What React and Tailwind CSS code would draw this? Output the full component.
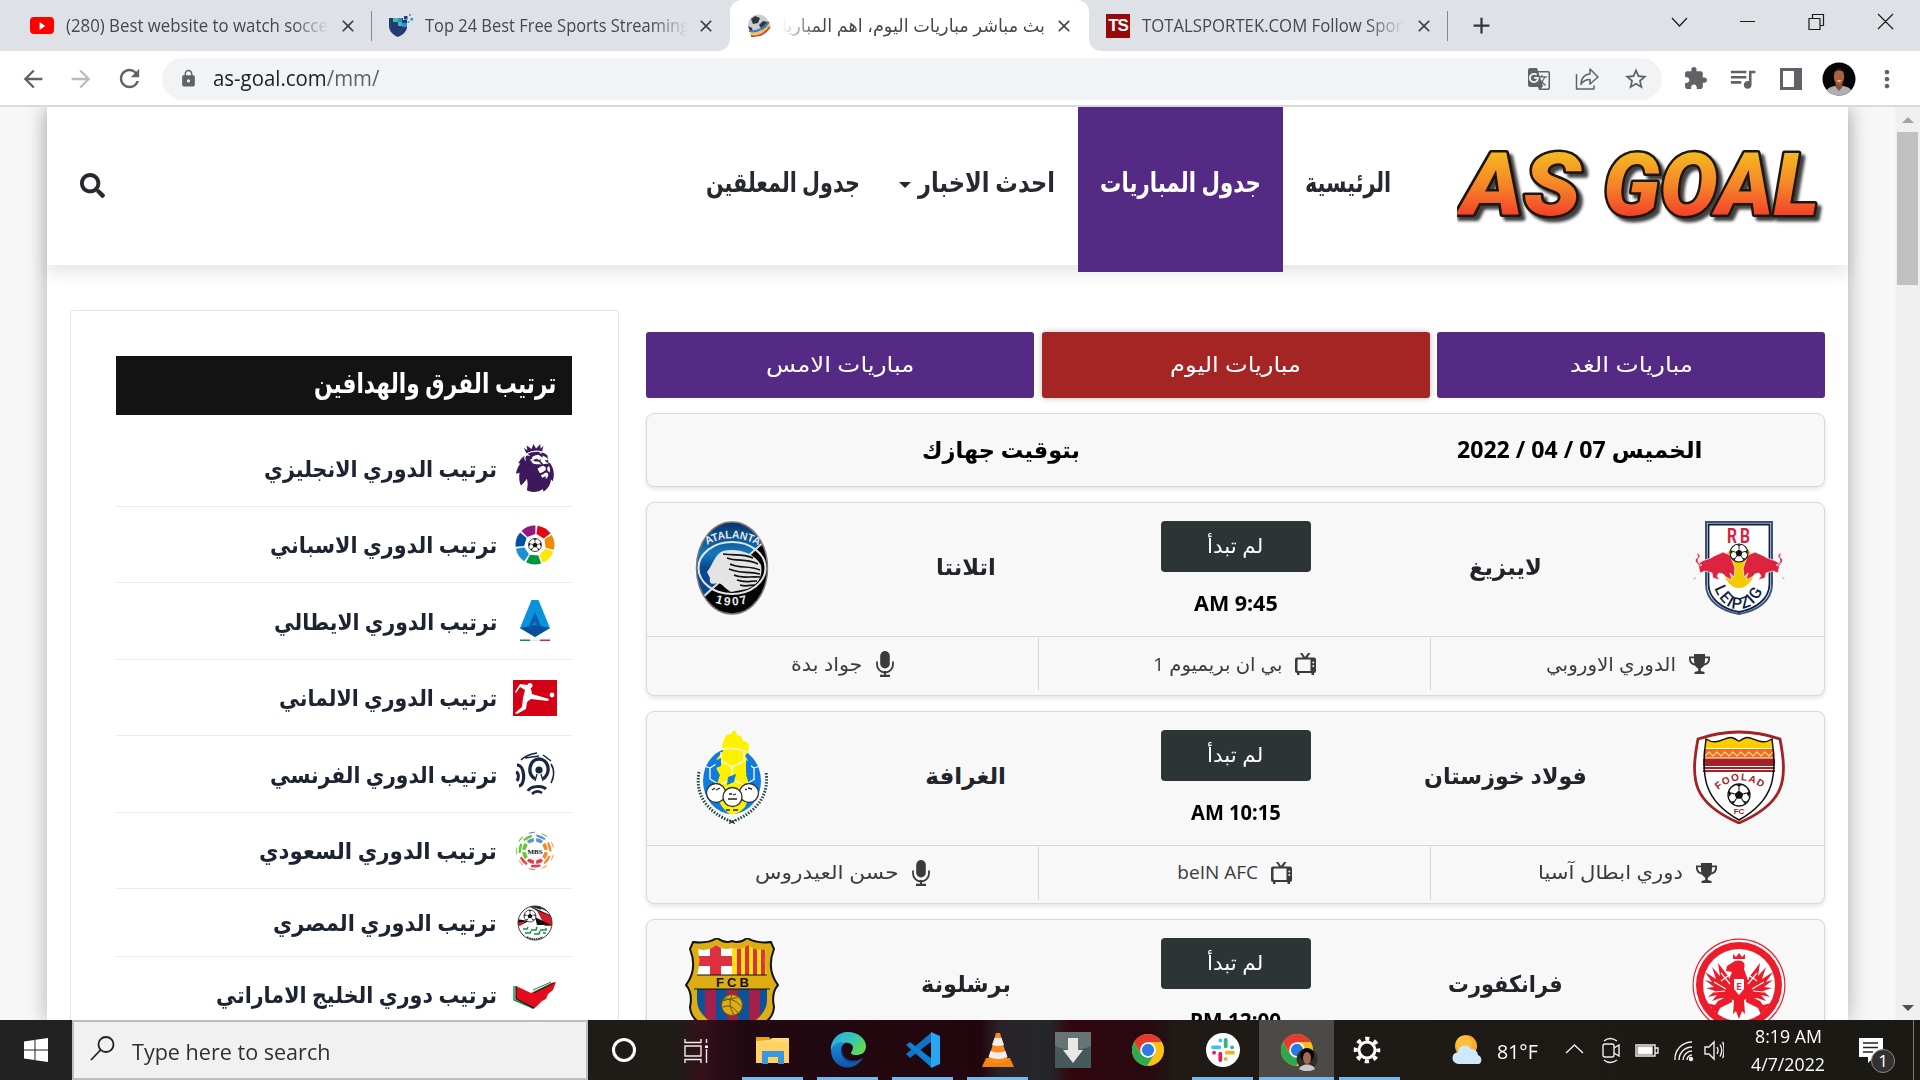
import React, { useLayoutEffect, useRef } from 'react';
import { MdArrowBack, MdArrowForward, MdRefresh, MdLock, MdExtension, MdQueueMusic, MdMoreVert, MdStarBorder, MdGTranslate, MdClose, MdAdd } from 'react-icons/md';
import { FaSearch } from 'react-icons/fa';
import { SiPremierleague } from 'react-icons/si';

const UI = "font-['Open_Sans','DejaVu_Sans',sans-serif]";

/* One line of text condensed or stretched to the width of its box. */
function Fit({ className = '', rtl = false, children }) {
  const box = useRef(null);
  const line = useRef(null);
  useLayoutEffect(() => {
    const fit = () => {
      if (!line.current || !box.current) return;
      const natural = line.current.offsetWidth;
      if (natural) line.current.style.transform = `scaleX(${box.current.clientWidth / natural})`;
    };
    fit();
    document.fonts.ready.then(fit);
  }, []);
  return (
    <div ref={box} dir={rtl ? 'rtl' : 'ltr'} className={`shrink-0 whitespace-nowrap ${className}`}>
      <span ref={line} className={`inline-block ${rtl ? 'origin-right' : 'origin-left'}`}>{children}</span>
    </div>
  );
}

/* ---------- browser window ---------- */

function Shield() {
  return (
    <svg viewBox="0 0 24 24" className="size-6 shrink-0">
      <path d="M0 4h18v10c-1 4-4 7-9 9-5-2-9-6-9-11z" fill="#233a73" />
      <path d="M4 4h5v4H4zM9 8h4v4H9z" fill="#3fbf9b" />
      <path d="M9 4h4v4H9zM13 9h5v4h-5z" fill="#2a8fe0" />
      <path d="M14 1h5v5h-5z" fill="#dee1e6" />
      <path d="M15 2h3.500v3.500H15z" fill="#1f3d7c" />
      <path d="M20 0h2v2h-2zM18.500 7h2v2h-2z" fill="#3fbf9b" />
      <path d="M21.500 4H24v2.500h-2.500z" fill="#2a8fe0" />
    </svg>
  );
}

function BallIcon() {
  return (
    <svg viewBox="0 0 24 24" className="size-6 shrink-0">
      <circle cx="11.500" cy="11" r="10.500" fill="#c9ccd0" />
      <path d="M4 5l4-3 5 2-2 5-5 1zM1 12l4 2 1 4-3-1zM12 11l4-4 5 1-1 5-5 3z" fill="#33363c" />
      <path d="M2 17c8 2 14-2 20-9" stroke="#3c7fd0" strokeWidth="2" fill="none" />
      <path d="M3 19.500c8 1.500 14-2 20-9" stroke="#f2c52d" strokeWidth="2" fill="none" />
      <path d="M4 22c8 1 14-2 19-9" stroke="#d33b35" strokeWidth="1.800" fill="none" />
    </svg>
  );
}

const CloseX = () => <MdClose className="size-[20px] shrink-0 text-[#3c4043]" />;

function TabStrip() {
  return (
    <div className="flex h-[51px] shrink-0 bg-[#dee1e6] text-[18px] text-[#45494d]">
      <div className="flex w-[371px] items-center pl-[30px]">
        <span className="flex h-[17px] w-6 items-center justify-center rounded bg-[#f00]">
          <svg viewBox="0 0 10 10" className="size-2"><path d="M2 0l7 5-7 5z" fill="#fff" /></svg>
        </span>
        <div className="ml-3 w-[263px] overflow-hidden [mask-image:linear-gradient(to_right,#000_86%,transparent)]">
          <Fit className="w-[269px]">(280) Best website to watch soccer</Fit>
        </div>
        <span className="ml-[9px]"><CloseX /></span>
      </div>
      <div className="mt-[11px] h-[30px] w-px bg-[#84878b]" />
      <div className="flex w-[346px] items-center pl-[17px]">
        <Shield />
        <div className="ml-3 w-[263px] overflow-hidden [mask-image:linear-gradient(to_right,#000_86%,transparent)]">
          <Fit className="w-[264px]">Top 24 Best Free Sports Streaming</Fit>
        </div>
        <span className="ml-[8px]"><CloseX /></span>
      </div>
      <div className="flex w-3 flex-col justify-end">
        <div className="h-3 w-3 bg-white"><div className="size-full rounded-br-xl bg-[#dee1e6]" /></div>
      </div>
      <div className="flex w-[359px] items-center rounded-t-xl bg-white pl-[17px]">
        <BallIcon />
        <div className="ml-[11px] w-[263px] overflow-hidden [mask-image:linear-gradient(to_left,#000_86%,transparent)]">
          <Fit rtl className="w-[263px]">بث مباشر مباريات اليوم، اهم المباريا</Fit>
        </div>
        <span className="ml-[9px]"><CloseX /></span>
      </div>
      <div className="-mr-3 flex w-3 flex-col justify-end">
        <div className="h-3 w-3 bg-white"><div className="size-full rounded-bl-xl bg-[#dee1e6]" /></div>
      </div>
      <div className="flex w-[358px] items-center pl-[17px]">
        <span className="flex h-6 w-6 items-center justify-center bg-[#98080b] font-['Liberation_Sans',sans-serif] text-[17px] leading-none font-bold tracking-[-1px] text-white">TS</span>
        <div className="ml-3 w-[262px] overflow-hidden [mask-image:linear-gradient(to_right,#000_86%,transparent)]">
          <Fit className="w-[266px]">TOTALSPORTEK.COM Follow Sport</Fit>
        </div>
        <span className="ml-[10px]"><CloseX /></span>
      </div>
      <div className="mt-[11px] h-[30px] w-px bg-[#84878b]" />
      <div className="flex w-[66px] items-center justify-center"><MdAdd className="size-[27px] text-[#33363a]" /></div>
      <div className="flex flex-1 justify-end pt-[13px]">
        <svg viewBox="0 0 240 18" className="mr-6 h-[18px] w-[240px]" fill="none" stroke="#1b1b1b" strokeWidth="1.200">
          <path d="M16 5l7.500 8 7.500-8M84 8.500h15" />
          <path d="M153 5.500h11v11h-11zM156.500 5.500v-4h11v11h-3.500M222 1l15 15M237 1l-15 15" />
        </svg>
      </div>
    </div>
  );
}

function Avatar() {
  return (
    <svg viewBox="0 0 34 34" className="size-[34px]">
      <clipPath id="av"><circle cx="17" cy="17" r="16.500" /></clipPath>
      <g clipPath="url(#av)">
        <rect width="34" height="34" fill="#050505" />
        <path d="M3 34c1-9 6-9 10-10h8c4 1 9 1 10 10z" fill="#aeb0b5" />
        <path d="M13.500 18h7v7l-3.500 4-3.500-4z" fill="#8c4e31" />
        <ellipse cx="17" cy="14.500" rx="5.200" ry="8" fill="#a8613f" />
        <path d="M11.500 12c0-9 11-9 11 0-2-5-9-5-11 0z" fill="#1a0f0b" />
        <path d="M14.500 18.500c2 1.500 3.500 1.500 5 0z" fill="#fff" />
      </g>
    </svg>
  );
}

function Toolbar() {
  return (
    <div className="flex h-14 shrink-0 items-center border-b-2 border-[#d8dadd] bg-white pt-px text-[#5f6368]">
      <div className="flex w-[162px] items-center gap-[20px] pl-[19px]">
        <MdArrowBack className="size-[28px]" />
        <MdArrowForward className="size-[28px] text-[#babcbe]" />
        <MdRefresh className="size-[29px]" />
      </div>
      <div className="flex h-[42px] w-[1500px] items-center rounded-full bg-[#f1f3f4] pr-[14px] pl-[17px]">
        <MdLock className="size-[19px]" />
        <Fit className="ml-[15px] w-[166px] text-[21px]"><span className="text-[#202124]">as-goal.com</span><span>/mm/</span></Fit>
        <div className="ml-auto flex items-center gap-6">
          <MdGTranslate className="size-6" />
          <svg viewBox="0 0 24 24" className="size-6" fill="none" stroke="currentColor" strokeWidth="1.500" strokeLinejoin="round">
            <path d="M1.500 7v15h17.500v-3.500" />
            <path d="M6 17.500c0-6.500 4-10.500 9-10.500V2l8 8-8 7v-4.500c-4 0-7 1.500-9 5z" />
          </svg>
          <MdStarBorder className="-mr-px size-[26px]" />
        </div>
      </div>
      <div className="flex flex-1 items-center pl-[21px]">
        <MdExtension className="size-[25px]" />
        <MdQueueMusic className="ml-[19px] size-[31px]" />
        <svg viewBox="0 0 22 22" className="ml-[22px] size-[22px]"><path d="M0 0h22v22H0zM3 3v16h11V3z" fill="currentColor" fillRule="evenodd" /></svg>
        <span className="ml-[20px]"><Avatar /></span>
        <MdMoreVert className="ml-[17px] size-[28px]" />
      </div>
    </div>
  );
}

/* ---------- league icons ---------- */

function ring(n, r1, r2, gap, colors, turn = 0) {
  return Array.from({ length: n }, (_, i) => {
    const a0 = ((i * 360) / n + gap + turn) * (Math.PI / 180);
    const a1 = (((i + 1) * 360) / n - gap + turn) * (Math.PI / 180);
    const p = (r, a) => `${(22 + r * Math.cos(a)).toFixed(2)} ${(22 + r * Math.sin(a)).toFixed(2)}`;
    return <path key={`${r1}-${i}`} d={`M${p(r1, a0)}L${p(r2, a0)}A${r2} ${r2} 0 0 1 ${p(r2, a1)}L${p(r1, a1)}z`} fill={colors[i % colors.length]} />;
  });
}

function MiniBall({ cx, cy, r }) {
  return (
    <g transform={`translate(${cx} ${cy}) scale(${r / 10})`}>
      <circle r="10" fill="#fff" stroke="#111" strokeWidth="1.200" />
      <path d="M0-4l4 3-1.500 4.500h-5L-4-1zM-3-9.500L0-7.500l3-2zM9-4L7-1l2.500 3zM-9-4l2 3-2.500 3zM5 8L4 5.500 7.500 6zM-5 8l1-2.500L-7.500 6z" fill="#111" />
      <path d="M0-4v-4M4-1l4-1M2.500 3.500L5 7M-2.500 3.500L-5 7M-4-1l-4-1" stroke="#111" />
    </g>
  );
}

const LaLiga = () => (
  <svg viewBox="0 0 44 44" className="size-[44px]">
    {ring(7, 11, 19.5, 3, ['#f18a00', '#ffe800', '#009640', '#1d8fd6', '#00529f', '#8f1a80', '#e30613'], -34)}
    <MiniBall cx={22} cy={22} r={6.5} />
  </svg>
);

const SerieA = () => (
  <svg viewBox="0 0 44 44" className="size-[44px]">
    <path d="M18.500 1h7L37 29l-15 9L7 29z" fill="#0a93dc" />
    <path d="M7 29l15-3 15 3-15 9z" fill="#0b4e9d" />
    <path d="M22 13l6 14h-5l-1-4-5 6h-2z" fill="#0b5fb0" />
    <path d="M7 40.500h10v1.500H7z" fill="#128b43" />
    <path d="M17 40.500h10v1.500H17z" fill="#e6e6e6" />
    <path d="M27 40.500h10v1.500H27z" fill="#ce2b37" />
  </svg>
);

const Bundesliga = () => (
  <svg viewBox="0 0 44 36" className="h-9 w-[44px]">
    <path d="M0 0h44v36H0z" fill="#d30113" />
    <circle cx="17" cy="5.500" r="2.500" fill="#fff" />
    <circle cx="39" cy="15" r="2.400" fill="#fff" />
    <path d="M7 4l8 1 3 4 1 5 17 5-1 2-17-2-4 3-1 7-9 5-2-1 7-6 1-9 2-8-5-3-4 6-1-1z" fill="#fff" />
  </svg>
);

const Ligue1 = () => (
  <svg viewBox="0 0 44 44" className="size-[44px]" fill="none" stroke="#1a2642">
    <circle cx="26" cy="18" r="3.600" fill="#1a2642" stroke="none" />
    <path d="M22 27c-9-6-5-20 4-20s13 13 4 20" strokeWidth="3.300" />
    <path d="M24 22l-2 7M28 22l2 7" strokeWidth="1.300" />
    <path d="M4 13c8 0 9 20 2 21" strokeWidth="3.200" />
    <path d="M3 20c3 1 3 6 1 9" strokeWidth="3" />
    <path d="M38 12c4 6 3 14 0 19M40 16c1 4 1 8-1 12" strokeWidth="1.500" />
    <path d="M15 39c2-5 14-6 18-2" strokeWidth="3" />
    <path d="M19 42c3-3 7-3 10-1" strokeWidth="2.600" />
    <path d="M8 8c4-4 9-6 16-7M12 6l14-2M30 3l8 6" strokeWidth="1.500" />
  </svg>
);

const Saudi = () => (
  <svg viewBox="0 0 44 44" className="size-[44px]">
    {ring(8, 9.5, 13, 6, ['#f58a2b', '#ee3a43', '#ee3a43', '#6ac335', '#6ac335', '#5c94cf', '#5c94cf', '#f58a2b'])}
    {ring(7, 14.5, 16.5, 8, ['#f58a2b', '#ee3a43', '#ee3a43', '#6ac335', '#6ac335', '#5c94cf', '#f58a2b'], 10)}
    {ring(9, 18.3, 19.2, 10, ['#f7a35a', '#f7a35a', '#ee6a70', '#f7a35a', '#8fd163', '#6ac335', '#5c94cf', '#6ac335', '#f7a35a'])}
    <text x="22" y="24.500" textAnchor="middle" fontSize="7" fontWeight="700" fontFamily="Liberation Serif, serif" fill="#111">MBS</text>
  </svg>
);

const Egypt = () => (
  <svg viewBox="0 0 44 44" className="size-[44px]">
    <clipPath id="eg"><circle cx="22" cy="22" r="17" /></clipPath>
    <g clipPath="url(#eg)">
      <path d="M0 0h44v44H0z" fill="#fff" />
      <path d="M10 2l32 14v4zM16 5l26 8v-8z" fill="#222" />
      <path d="M24 10l18 6v9H32z" fill="#d71a28" />
      <path d="M22 16l16 8H24zM4 18l12 2-10 5z" fill="#111" />
      <path d="M4 22l9-2-6 5z" fill="#d71a28" />
      <path d="M28 8l12 6M26 5l14 6M12 8l-6 8M14 6L6 12" stroke="#fff" />
      <MiniBall cx={17} cy={15} r={6} />
      <path d="M3 25h38v10H3z" fill="#fff" />
      <path d="M10 28h4l1-2m3 3h5l1-3m3 3h6v-2M12 32h5l1-2m3 3h5l1-3m3 2h3" stroke="#0f9246" strokeWidth="1.500" fill="none" />
      <path d="M14 36q8 4 16 0" stroke="#333" strokeWidth="1.600" fill="none" strokeDasharray="1.500 .8" />
    </g>
    <circle cx="22" cy="22" r="17" fill="none" stroke="#333" />
  </svg>
);

const Emirates = () => (
  <svg viewBox="0 0 44 28" className="h-7 w-[44px]">
    <path d="M3 5l15 7L38 2l5-1-3 8-5 4-2 5-4 2-6 6-3 2L3 18z" fill="#e30b20" />
    <path d="M1 5v14l19 8" fill="none" stroke="#0f9246" strokeWidth="1.400" />
    <path d="M3 5v13l18 9" fill="none" stroke="#111" strokeWidth="1.200" />
    <path d="M20 9L38 1M21 11l20-9" stroke="#0f9246" strokeWidth="1" />
    <path d="M21 12l20-10" stroke="#111" strokeWidth=".8" />
  </svg>
);

const PremierLeague = () => <SiPremierleague className="size-[48px] text-[#3d195b]" />;

const leagues = [
  { text: 'ترتيب الدوري الانجليزي', w: 'w-[233px]', h: 'h-[77px]', Icon: PremierLeague },
  { text: 'ترتيب الدوري الاسباني', w: 'w-[227px]', h: 'h-[76px]', Icon: LaLiga },
  { text: 'ترتيب الدوري الايطالي', w: 'w-[223px]', h: 'h-[77px]', Icon: SerieA },
  { text: 'ترتيب الدوري الالماني', w: 'w-[218px]', h: 'h-[76px]', Icon: Bundesliga },
  { text: 'ترتيب الدوري الفرنسي', w: 'w-[227px]', h: 'h-[77px]', Icon: Ligue1 },
  { text: 'ترتيب الدوري السعودي', w: 'w-[238px]', h: 'h-[76px]', Icon: Saudi },
  { text: 'ترتيب الدوري المصري', w: 'w-[224px]', h: 'h-[68px]', Icon: Egypt },
  { text: 'ترتيب دوري الخليج الاماراتي', w: 'w-[281px]', h: 'h-[76px]', Icon: Emirates },
];

/* ---------- club crests ---------- */

const Leipzig = () => (
  <svg viewBox="0 0 94 94" className="size-[94px]">
    <path d="M14 1h66v62c0 17-15 27-33 30C29 90 14 80 14 63z" fill="#fff" stroke="#3c527b" strokeWidth="2" />
    <path d="M16.500 3.500h61V63c0 15-14 25-30.500 28C30.500 88 16.500 78 16.500 63z" fill="none" stroke="#0c2044" strokeWidth="1.800" />
    <text x="35" y="22" fontSize="20" fontWeight="700" fontFamily="Roboto, sans-serif" textLength="10" lengthAdjust="spacingAndGlyphs" fill="#dd1f3f">R</text>
    <text x="48" y="22" fontSize="20" fontWeight="700" fontFamily="Roboto, sans-serif" textLength="10" lengthAdjust="spacingAndGlyphs" fill="#dd1f3f">B</text>
    <ellipse cx="47" cy="46" rx="16" ry="21" fill="#f6c800" />
    {['', 'translate(94 0) scale(-1 1)'].map((t) => (
      <g key={t} transform={t} stroke="#fff" strokeWidth=".7" fill="#dc2440">
        <path d="M0 59l8-7-2-9c5-5 11-4 16-8l9-4 7 3 5 13-1 9-4-4 2 7-6-3-3-3-4-1-2 3 3 4-7-2-1-5-7-2-7 3-3 5z" />
        <path d="M8 45c-5-4-6-6-3-8 2-2 0-4-2-5l4 1c3 3-2 4-1 7 0 2 2 3 4 4z" />
      </g>
    ))}
    <MiniBall cx={47} cy={32} r={9} />
    <path id="lz" d="M22 66Q30 88 47 88T72 66" fill="none" />
    <text fontSize="16" fontWeight="500" fontFamily="Roboto, sans-serif" fill="#101c44" textLength="66" lengthAdjust="spacing"><textPath href="#lz" startOffset="1">LEIPZIG</textPath></text>
  </svg>
);

const Atalanta = () => (
  <svg viewBox="0 0 74 94" className="h-[94px] w-[74px]">
    <defs>
      <linearGradient id="at" x2="0" y2="1"><stop stopColor="#0a2f66" /><stop offset=".35" stopColor="#1279bd" /><stop offset=".5" stopColor="#0c4592" /></linearGradient>
      <clipPath id="atc"><ellipse cx="37" cy="47" rx="35.500" ry="46" /></clipPath>
    </defs>
    <g clipPath="url(#atc)">
      <path d="M0 0h74v94H0z" fill="url(#at)" />
      <path d="M74 14L0 86v8h74z" fill="#050505" />
      <path d="M72 18L8 76" stroke="#ddd" strokeWidth="2" />
    </g>
    <ellipse cx="37" cy="47" rx="35.500" ry="46" fill="none" stroke="#777" strokeWidth="1.500" />
    <ellipse cx="37" cy="47" rx="33.500" ry="26" fill="none" stroke="#e5e5e5" strokeWidth="2" />
    <path d="M28 30c12-3 30 0 38 14 2 12-3 20-14 24l-16 3c-7-4-8-8-13-9-7 2-9 0-8-5l-3-6c6-7 7-17 16-21z" fill="#e4e4e4" />
    <path d="M28 33c14 2 18-1 30 4M32 37c10 4 20 0 31 6M35 43c10 5 18 1 30 6M34 48c12 5 18 2 31 5M39 54c9 4 15 1 26 2M42 59c8 3 12 1 20 1M45 64c6 2 10 0 15 0" stroke="#111" strokeWidth="1.700" fill="none" />
    <path id="at1" d="M12 24Q37 10 64 25" fill="none" />
    <text fontSize="11" fontFamily="Liberation Sans, sans-serif" fill="#e8e8e8" textLength="54" lengthAdjust="spacingAndGlyphs"><textPath href="#at1">ATALANTA</textPath></text>
    <path id="at2" d="M18 81Q37 88 56 81" fill="none" />
    <text fontSize="12" fontFamily="Liberation Sans, sans-serif" fill="#e8e8e8" textLength="33" lengthAdjust="spacing"><textPath href="#at2" startOffset="2">1907</textPath></text>
  </svg>
);

const Foolad = () => (
  <svg viewBox="0 0 94 94" className="size-[94px]">
    <path d="M6 9Q47-5 88 9c8 42 5 64-41 84C1 73-2 51 6 9z" fill="#fff" stroke="#a32224" strokeWidth="2.800" />
    <path d="M14 9c12 8 20-4 27-1 3 1 5 3 6 3s3-2 6-3c7-3 15 9 27 1l3 30H11z" fill="#ffcc00" />
    <path d="M12 19h70l1 9H11z" fill="#f76b13" />
    <path d="M11 28h72v14H11z" fill="#a32224" />
    <path d="M11 18.500h72M11 28h72M11 36.500h72M11 39.500h72" stroke="#fff" strokeWidth="1.200" />
    <path d="M13 26l4-4 4 4 4-4 4 4 4-4 4 4 4-4 4 4 4-4 4 4 4-4 4 4 4-4 4 4 4-4 4 4 4-4" fill="none" stroke="#ffe1b0" strokeWidth="1.100" />
    <path d="M14 9c12 8 20-4 27-1 3 1 5 3 6 3s3-2 6-3c7-3 15 9 27 1 5 36 3 61-33 81C11 70 9 45 14 9z" fill="none" stroke="#111" strokeWidth="1.500" />
    <path id="fo" d="M26 60Q47 42 70 58" fill="none" />
    <text fontSize="10" fontWeight="700" fontFamily="Liberation Sans, sans-serif" fill="#a32224" textLength="48" lengthAdjust="spacing"><textPath href="#fo">FOOLAD</textPath></text>
    <MiniBall cx={47} cy={65} r={11} />
    <text x="47" y="84" textAnchor="middle" fontSize="8" fontWeight="700" fontFamily="Liberation Sans, sans-serif" fill="#a32224">FC</text>
  </svg>
);

const Gharafa = () => (
  <svg viewBox="0 0 74 94" className="h-[94px] w-[74px]">
    <ellipse cx="37" cy="51" rx="29" ry="33" fill="#0f7be0" />
    <path d="M38 1l-2 3-5 1-2 5-2 5 1 6-3 4c-7 6-4 14 0 20-5 12-4 22 1 30 8 12 14 12 24 2 5-10 6-20 1-32 4-7 3-15-1-19l3-4 1-7-2-3-4-1-2-5-4-1-1-4z" fill="#fff100" />
    <g fill="none" stroke="#fff" strokeWidth="1.300">
      <path d="M24 20q13-4 28 2M26 22v9l11 6 12-6v-9M37 37v12l-12 6-10-6M37 49l12 6 11-6M26 31l-11 7v11M49 31l10 7v11M15 38l-6-2M59 38l6-2" />
    </g>
    <path d="M20 31l6-3v8l-5 2zM51 30l5 4v12l-5-3zM33 47l8-3-2 8-7 3z" fill="#0f7be0" />
    <g fill="#fff" stroke="#333" strokeWidth="1.300">
      <circle cx="21" cy="63" r="9.500" /><circle cx="54" cy="63" r="9.500" /><circle cx="37.500" cy="67" r="9.500" />
    </g>
    <path d="M17 60l3-2m1 2l4-2M50 59l2 1m1-2l4 1M34 64h3m1 1l3-1M33 69h9M31 80h4m3 0h5" stroke="#222" strokeWidth="1.300" />
    <path d="M4 42Q-2 76 37 92Q76 76 71 42" fill="none" stroke="#1c4733" strokeWidth="3" strokeDasharray="1.500 1.500" />
    <path d="M34 90l6 4M40 90l-6 4" stroke="#222" />
  </svg>
);

const Frankfurt = () => (
  <svg viewBox="0 0 94 94" className="size-[94px]">
    <circle cx="47" cy="47" r="46.500" fill="#ec1c2b" />
    <circle cx="47" cy="47" r="45.300" fill="#fff" />
    <circle cx="47" cy="47" r="43" fill="#ec1c2b" />
    <circle cx="47" cy="47" r="36" fill="#fff" />
    <g fill="#ec1c2b">
      <path d="M41 21v-5l3 3 3-4 3 4 3-3v5zM35 28l8-5c8-2 11 2 9 8l5 14-2 15-8 6-9-6-2-16 4-10-6-1z" />
      {['', 'translate(94 0) scale(-1 1)'].map((t) => (
        <g key={t} transform={t}>
          <path d="M42 52L36 38 26 25l2 13-8-9 4 12-11-7 7 10-7-2 9 7-8 1 9 3-7 6 9-2-5 6 9-3 9 0z" />
          <path d="M40 56L26 63l-3 4-9-2 6 5-3 5 6-2 1 6 4-9 12-6zM42 62l-1 14 3-3 3 8V60z" />
        </g>
      ))}
    </g>
    <g stroke="#fff" strokeWidth="1.200"><path d="M29 35l9 11M65 35L56 46M29 43l7-5M65 43l-7-5M22 44l12 7M72 44l-12 7M22 54l11-1M72 54l-11-1" /></g>
    <path d="M42 41h10v10l-5 6-5-6z" fill="#fff" />
    <text x="47" y="51.500" textAnchor="middle" fontSize="9" fontWeight="700" fontFamily="Roboto, sans-serif" fill="#ec1c2b">E</text>
  </svg>
);

const Barcelona = () => (
  <svg viewBox="0 0 94 94" className="size-[94px]">
    <defs><clipPath id="ba"><path d="M13 11q10 3 18-4 8 6 16 3 9 3 16-3 8 7 18 4-3 15 1 26v25q0 20-35 31Q12 82 12 62V37q4-11 1-26z" /></clipPath></defs>
    <path d="M8 4q15 2 24-4 8 6 15 3 8 3 15-3 10 6 24 4l3 7q-8 20 4 36-7 8-4 22c-1 17-20 23-42 25C25 92 6 86 5 69q3-14-4-22Q13 31 5 11z" fill="#dcae13" stroke="#111" strokeWidth="2" />
    <g clipPath="url(#ba)">
      <path d="M0 0h47v37H0z" fill="#fff" />
      <path d="M25 0h11v37H25zM0 18h47v10H0z" fill="#dd3140" />
      <path d="M47 0h47v37H47z" fill="#ffe017" />
      <path d="M52 0h4v37h-4zM60 0h4v37h-4zM68 0h4v37h-4zM76 0h4v37h-4z" fill="#dd3140" />
      <path d="M0 37h94v14H0z" fill="#dcae13" />
      <path d="M0 51h94v43H0z" fill="#0b529b" />
      <path d="M20 51h11v43H20zM42 51h11v43H42zM64 51h11v43H64z" fill="#a2214b" />
    </g>
    <path d="M12 37h70M9 51h76" stroke="#111" strokeWidth="1" />
    <text x="31" y="48.500" fontSize="13" fontWeight="700" fontFamily="Liberation Sans, sans-serif" textLength="33" fill="#111">FCB</text>
    <circle cx="47" cy="67" r="10.500" fill="#dcae13" stroke="#6d5204" />
    <path d="M38 63q9-5 18 5M38 69q8-4 15 6M47 57q-5 9 2 20M53 59q-6 3-14 2" stroke="#6d5204" fill="none" />
  </svg>
);

/* ---------- page ---------- */

function AsGoalLogo() {
  return (
    <svg viewBox="0 0 368 84" className="h-[84px] w-[368px] shrink-0">
      <defs>
        <linearGradient id="lg" x1="0" y1="9" x2="0" y2="76" gradientUnits="userSpaceOnUse"><stop offset="0" stopColor="#f4ba20" /><stop offset=".5" stopColor="#f58428" /><stop offset="1" stopColor="#f4392a" /></linearGradient>
        <filter id="ls" x="-5%" y="-10%" width="112%" height="130%"><feDropShadow dx="4" dy="4" stdDeviation="1.700" floodColor="#000" floodOpacity=".75" /></filter>
      </defs>
      <g filter="url(#ls)" fill="url(#lg)" stroke="#1c1410" strokeWidth="5" paintOrder="stroke" strokeLinejoin="round" fontFamily="Roboto, sans-serif" fontWeight="900" fontStyle="italic" fontSize="87">
        <text x="4" y="72" textLength="120" lengthAdjust="spacingAndGlyphs">AS</text>
        <text x="146" y="72" textLength="216" lengthAdjust="spacingAndGlyphs">GOAL</text>
      </g>
    </svg>
  );
}

function Header() {
  return (
    <header dir="rtl" className="relative flex h-[158px] shrink-0 bg-white pr-[23px] text-[27px] leading-[38px] font-semibold text-[#26292e] shadow-[0_8px_16px_rgba(0,0,0,0.1)]">
      <div className="pt-[36px]"><AsGoalLogo /></div>
      <nav className="mr-[44px] flex">
        <a className="flex h-[165px] w-[130px] justify-center pt-[56px]"><Fit rtl className="w-[86px]">الرئيسية</Fit></a>
        <a className="flex h-[165px] w-[205px] justify-center bg-[#552a85] pt-[56px] font-bold text-white"><Fit rtl className="w-[161px]">جدول المباريات</Fit></a>
        <a className="flex h-[165px] gap-[7px] pt-[56px] pr-[23px]">
          <Fit rtl className="w-[137px]">احدث الاخبار</Fit>
          <svg viewBox="0 0 12 6" className="mt-[19px] h-[6px] w-[12px]"><path d="M0 0h12L6 6z" fill="currentColor" /></svg>
        </a>
        <a className="flex h-[165px] pt-[56px] pr-[39px]"><Fit rtl className="w-[154px]">جدول المعلقين</Fit></a>
      </nav>
      <FaSearch className="mt-[66px] mr-auto ml-[33px] size-[25px]" />
    </header>
  );
}

function Sidebar() {
  return (
    <aside className="mt-[45px] mr-[27px] w-[549px] rounded border border-[#e4e4e4] bg-white pr-[46px] pl-[45px] pt-[45px]">
      <div className="flex h-[59px] bg-[#131313] pt-[7px] pr-[15px] text-[28px] leading-[39px] font-bold text-white"><Fit rtl className="w-[243px]">ترتيب الفرق والهدافين</Fit></div>
      <div className="pt-[15px]">
        {leagues.map(({ text, w, h, Icon }) => (
          <div key={text} className={`flex items-center border-b border-[#ebebeb] pr-[13px] text-[23px] leading-none font-bold text-[#1b2430] ${h}`}>
            <span className="flex w-12 justify-center"><Icon /></span>
            <Fit rtl className={`mr-[14px] ${w}`}>{text}</Fit>
          </div>
        ))}
      </div>
    </aside>
  );
}

const TvIcon = () => (
  <svg viewBox="0 0 21 22" className="h-[22px] w-[21px]">
    <path d="M5 0l2-.5L10 4l3.500-4.500 2 .5-3 4.500H19a2 2 0 012 2V18a2 2 0 01-2 2v2h-2.500v-2h-12v2H2v-2a2 2 0 01-2-2V6.500a2 2 0 012-2h6zM2.500 7.500v9.500q0 1 1 1h12V6.500h-12q-1 0-1 1z" fill="currentColor" fillRule="evenodd" />
    <circle cx="18.300" cy="9.500" r=".9" fill="#fff" /><circle cx="18.300" cy="13" r=".9" fill="#fff" />
  </svg>
);
const MicIcon = () => (
  <svg viewBox="0 0 18 26" className="h-[26px] w-[18px]">
    <rect x="4.200" width="9.600" height="17.500" rx="4.800" fill="currentColor" />
    <path d="M1 10.500v3a8 8 0 0016 0v-3" fill="none" stroke="currentColor" strokeWidth="1.800" />
    <path d="M8 20h2v4H8zM4 23.700h10V26H4z" fill="currentColor" />
  </svg>
);
const CupIcon = () => (
  <svg viewBox="0 0 21 20" className="h-5 w-[21px]">
    <path d="M5 0h11v2.500h5V5c0 3.500-2.500 6-6 6.500-.7 1.500-2 2.500-3.200 2.900V17l3.700 1v2h-10v-2l3.700-1v-2.600C8 14 6.700 13 6 11.500 2.500 11 0 8.500 0 5V2.500h5zM1.700 4.200C1.800 7 3.300 9 5.500 9.600 5 8 5 6 5 4.200zM16 4.200c0 1.800 0 3.800-.5 5.400 2.200-.6 3.700-2.600 3.800-5.400z" fill="currentColor" fillRule="evenodd" />
  </svg>
);

const matches = [
  { home: 'لايبزيغ', hw: 'w-[73px]', HomeCrest: Leipzig, away: 'اتلانتا', aw: 'w-[60px]', AwayCrest: Atalanta, time: 'AM 9:45', tw: 'w-[84px]', cup: 'الدوري الاوروبي', cw: 'w-[130px]', tv: 'بي ان بريميوم 1', vw: 'w-[129px]', mic: 'جواد بدة', mw: 'w-[71px]' },
  { home: 'فولاد خوزستان', hw: 'w-[163px]', HomeCrest: Foolad, away: 'الغرافة', aw: 'w-[81px]', AwayCrest: Gharafa, time: 'AM 10:15', tw: 'w-[90px]', cup: 'دوري ابطال آسيا', cw: 'w-[145px]', tv: 'beIN AFC', vw: 'w-[81px]', mic: 'حسن العيدروس', mw: 'w-[144px]' },
  { home: 'فرانكفورت', hw: 'w-[115px]', HomeCrest: Frankfurt, away: 'برشلونة', aw: 'w-[90px]', AwayCrest: Barcelona, time: 'PM 12:00', tw: 'w-[91px]', cup: 'الدوري الاوروبي', cw: 'w-[130px]', tv: 'بي ان بريميوم 1', vw: 'w-[129px]', mic: 'حسن العيدروس', mw: 'w-[144px]' },
];

function MatchCard({ m }) {
  return (
    <article className="mb-[15px] h-[193.5px] rounded-lg border border-[#d6d8da] bg-[#f8f8f8] shadow-[0_2px_4px_rgba(40,50,80,0.13)]">
      <div className="grid h-[134px] grid-cols-[170px_297px_1fr_297px_170px] border-b border-[#d6d8da] text-[23px] leading-[33px] font-bold text-[#212529]">
        <div className="flex justify-center pt-[18px]"><m.HomeCrest /></div>
        <div className="flex justify-center pt-[47px]"><Fit rtl className={m.hw}>{m.home}</Fit></div>
        <div className="flex flex-col items-center pt-[18px] text-black">
          <div className="flex h-[51px] w-[150px] justify-center rounded bg-[#2d3436] pt-[10px] text-[20px] leading-[29px] font-normal text-white"><Fit rtl className="w-[56px]">لم تبدأ</Fit></div>
          <Fit className={`mt-[15px] font-['Noto_Sans',sans-serif] text-[21px] leading-[33px] ${m.tw}`}>{m.time}</Fit>
        </div>
        <div className="flex justify-center pt-[47px]"><Fit rtl className={m.aw}>{m.away}</Fit></div>
        <div className="flex justify-center pt-[18px]"><m.AwayCrest /></div>
      </div>
      <div className="grid h-[54px] grid-cols-[394px_392px_1fr] divide-x divide-[#d6d8da] text-[19px] text-[#3b3b3b]">
        <div className="flex items-center justify-center gap-[13px]"><CupIcon /><Fit rtl className={m.cw}>{m.cup}</Fit></div>
        <div className="flex items-center justify-center gap-[13px]"><TvIcon /><Fit rtl className={m.vw}>{m.tv}</Fit></div>
        <div className="flex items-center justify-center gap-[13px]"><MicIcon /><Fit rtl className={m.mw}>{m.mic}</Fit></div>
      </div>
    </article>
  );
}

function Page() {
  return (
    <div className="flex h-[913px] shrink-0 overflow-hidden bg-[#f7f7f7]">
      <div className="flex flex-1 justify-start pl-[47px]">
        <div className="flex w-[1801px] flex-col bg-white shadow-[0_0_20px_rgba(0,0,0,0.3)]">
          <Header />
          <div dir="rtl" className="flex">
            <main className="mr-[23px] w-[1179px] pt-[67px]">
              <div className="grid h-[66px] grid-cols-3 gap-[7.500px] text-[21px] leading-[30px] text-white">
                <div className="flex justify-center rounded-[3px] bg-[#552a85] pt-[17px]"><Fit rtl className="w-[123px]">مباريات الغد</Fit></div>
                <div className="flex justify-center rounded-[3px] bg-[#a52524] pt-[17px] shadow-[0_0_6px_rgba(0,0,0,0.25)]"><Fit rtl className="w-[131px]">مباريات اليوم</Fit></div>
                <div className="flex justify-center rounded-[3px] bg-[#552a85] pt-[17px]"><Fit rtl className="w-[148px]">مباريات الامس</Fit></div>
              </div>
              <div className="mt-[15px] mb-[15px] flex h-[74px] rounded-lg border border-[#d6d8da] bg-[#f8f8f8] pt-[19px] text-[23px] leading-[33px] font-bold text-black shadow-[0_2px_4px_rgba(40,50,80,0.13)]">
                <Fit rtl className="mr-[121px] w-[246px]">الخميس 07 / 04 / 2022</Fit>
                <Fit rtl className="mr-[377px] w-[158px]">بتوقيت جهازك</Fit>
              </div>
              {matches.map((m) => <MatchCard key={m.home} m={m} />)}
            </main>
            <Sidebar />
          </div>
        </div>
      </div>
      <div className="flex w-[25px] flex-col items-center bg-[#f0f0f0] pt-[10px]">
        <svg viewBox="0 0 12 6" className="h-[6px] w-[12px]"><path d="M6 0l6 6H0z" fill="#a3a3a3" /></svg>
        <div className="mt-[9px] h-[153px] w-[21px] bg-[#c1c1c1]" />
        <svg viewBox="0 0 12 6" className="mt-auto mb-[9px] h-[6px] w-[12px]"><path d="M0 0h12L6 6z" fill="#505050" /></svg>
      </div>
    </div>
  );
}

/* ---------- taskbar ---------- */

const Chrome = ({ className }) => (
  <svg viewBox="0 0 36 36" className={className}>
    <circle cx="18" cy="18" r="17" fill="#fbc116" />
    <path d="M3.300 9.500A17 17 0 0132.700 9.500H18L10.500 22z" fill="#e33b2e" />
    <path d="M3.300 9.500A17 17 0 0017 35l8-13-7 4-8-4z" fill="#2da94f" />
    <circle cx="18" cy="18" r="8.300" fill="#fff" />
    <circle cx="18" cy="18" r="6.500" fill="#2c7be5" />
  </svg>
);

const Folder = () => (
  <svg viewBox="0 0 34 28" className="h-7 w-[34px]">
    <path d="M0 1h13l3 4h-4H0z" fill="#e8a20c" /><path d="M0 5h33v22H0z" fill="#ffd263" /><path d="M0 5l14-1 2-2h17v4H0z" fill="#ffd97a" />
    <path d="M6 15h22v13h-6v-7H12v7H6z" fill="#3a96dd" />
  </svg>
);
const Edge = () => (
  <svg viewBox="0 0 36 36" className="size-9">
    <defs><linearGradient id="ed" x2="1" y2=".5"><stop stopColor="#2aa7ea" /><stop offset=".6" stopColor="#35c6b8" /><stop offset="1" stopColor="#5edb52" /></linearGradient><linearGradient id="ee" x2="0" y2="1"><stop stopColor="#1b8ee0" /><stop offset="1" stopColor="#1152a9" /></linearGradient></defs>
    <path d="M1 19C0 8 8 0 18 0s18 7 18 14c0 7-5 9-10 9s-6-2-4-4c3-5-1-9-7-8C8 11 2 14 1 19z" fill="url(#ed)" />
    <path d="M1 18c3-7 9-9 14-7-4 2-5 8-3 12 4 7 13 8 21 3C28 34 20 37 13 35 5 32 1 26 1 18z" fill="url(#ee)" />
    <path d="M14 12c-5 5-4 15 5 19 7 1 11-1 14-5-8 4-17 3-20-4-1-4-1-7 1-10z" fill="#0d468f" opacity=".6" />
  </svg>
);
const Code = () => (
  <svg viewBox="0 0 36 36" className="size-9">
    <path d="M1 22l4 4L27 9V0z" fill="#1173c5" /><path d="M1 13l4-3 22 17v9z" fill="#0f7fd0" /><path d="M26 0l9 4v28l-9 4z" fill="#2aa5f3" />
  </svg>
);
const Vlc = () => (
  <svg viewBox="0 0 32 36" className="h-9 w-8">
    <path d="M4 26h24l4 9H0z" fill="#f18315" /><path d="M14 1h4l8 28q-10 5-20 0z" fill="#fb8c1c" />
    <path d="M12.500 6h7l2.500 7q-6 2-12 0zM8.500 19q7 3 15 0l2 6q-9 4-19 0z" fill="#efefef" />
  </svg>
);
const Downloader = () => (
  <svg viewBox="0 0 36 36" className="size-9">
    <path d="M0 0h36v36H0z" fill="#46595a" /><path d="M0 0h36v14q-18 8-36 0z" fill="#687374" />
    <path d="M13 6h10v12h5L18 31 8 18h5z" fill="#e8e8e8" />
  </svg>
);
const Slack = () => (
  <svg viewBox="0 0 36 36" className="size-9">
    <circle cx="18" cy="18" r="17" fill="#fff" />
    <g strokeWidth="3.800" strokeLinecap="round">
      <path d="M8 15.300h6.300M15.300 8.500h.1" stroke="#36c5f0" />
      <path d="M20.700 8v6.300M27 15.300h.1" stroke="#2eb67d" />
      <path d="M21.700 20.700H28M20.700 27v.1" stroke="#ecb22e" />
      <path d="M15.300 21.700V28M9 20.700h.1" stroke="#e01e5a" />
    </g>
  </svg>
);
const Gear = () => (
  <svg viewBox="0 0 28 28" className="mr-[5px] size-7" fill="none" stroke="#fff">
    <circle cx="14" cy="14" r="8" strokeWidth="3" /><circle cx="14" cy="14" r="11.300" strokeWidth="4" strokeDasharray="4.200 4.675" strokeDashoffset="2.100" />
  </svg>
);

function ActiveChrome() {
  return (
    <div className="relative">
      <Chrome className="size-[34px]" />
      <svg viewBox="0 0 22 24" className="absolute -right-1 -bottom-1 h-6 w-[22px]">
        <circle cx="11" cy="12" r="10.500" fill="#302d2c" /><circle cx="11" cy="8" r="7" fill="#080606" /><ellipse cx="11" cy="11" rx="4" ry="6" fill="#a26a50" /><path d="M3 22c2-6 14-6 16 0-5 3-11 3-16 0z" fill="#c9c9c9" />
      </svg>
    </div>
  );
}

const apps = [
  { Icon: Folder, open: true }, { Icon: Edge, open: true }, { Icon: Code, open: true }, { Icon: Vlc, open: true },
  { Icon: Downloader }, { Icon: () => <Chrome className="size-[34px]" /> }, { Icon: Slack, open: true },
  { Icon: ActiveChrome, open: true, active: true }, { Icon: Gear, open: true },
];

function Taskbar() {
  return (
    <div className="flex h-[60px] shrink-0 bg-[linear-gradient(90deg,#201e19_0,#1f1c18_680px,#35101a_700px,#210912_740px,#23060d_980px,#292329_1000px,#24262b_1050px,#32070f_1070px,#270910_1150px,#1f1a16_1175px,#1b1914_1920px)] text-white">
      <div className="flex w-[72px] items-center justify-center bg-[#222]">
        <svg viewBox="0 0 24 24" className="size-6"><path d="M0 3.500l10.500-1.500v9.500H0zM11.500 1.800L24 0v11.500H11.500zM0 12.500h10.500V22L0 20.500zM11.500 12.500H24V24l-12.500-1.800z" fill="#fff" /></svg>
      </div>
      <div className="flex w-[516px] items-center border-2 border-[#bebebe] bg-[#f1f1f1] pl-4 text-[#303030]">
        <svg viewBox="0 0 25 25" className="-mt-1 h-[25px] w-[25px]" fill="none" stroke="#202020" strokeWidth="1.800"><circle cx="16" cy="8.500" r="7.500" /><path d="M10.500 14L1 24" /></svg>
        <Fit className="mt-[3px] ml-[17px] w-[198px] text-[22px]">Type here to search</Fit>
      </div>
      <div className="flex w-[72px] items-center justify-center"><span className="size-[24px] rounded-full border-[3px] border-white" /></div>
      <div className="flex w-[75px] items-center justify-center">
        <svg viewBox="0 0 25 25" className="-ml-[2px] size-[25px]" fill="none" stroke="#eee" strokeWidth="1.400"><path d="M1 1v3.500h16V1M1 8h16v10H1zM1 25v-3.500h16V25M22.500 1v4M22.500 11v14" /><path d="M21 7.500h3V10h-3z" fill="#fff" stroke="none" /></svg>
      </div>
      {apps.map(({ Icon, open, active }, i) => (
        <div key={i} className={`flex h-full w-[75px] flex-col items-center ${active ? '-mr-[2px] -ml-px w-[73px] bg-[#4b4a47]' : ''}`}>
          <div className="flex h-[57px] items-center pt-[3px]"><Icon /></div>
          {open && <div className={`h-[3px] bg-[#76b9ed] ${active ? 'w-full' : 'w-[61px]'}`} />}
        </div>
      ))}
      <div className="flex flex-1 items-center pl-[45px]">
        <svg viewBox="0 0 32 30" className="h-[30px] w-8"><circle cx="14" cy="11" r="11" fill="#f9ac28" /><circle cx="12" cy="9" r="8" fill="#fcc13c" /><path d="M7 29a6 6 0 01-1-12 7 7 0 0113-3 6.500 6.500 0 017 6 5 5 0 011 9z" fill="#cfe8fb" /></svg>
        <Fit className="mt-1 ml-[13px] w-[41px] text-[20px]">81°F</Fit>
        <svg viewBox="0 0 160 28" className="ml-[26px] h-7 w-[160px]" fill="none" stroke="#eee" strokeWidth="1.400">
          <path d="M2 17l8.500-8 8.500 8" />
          <rect x="39" y="8" width="11" height="13" rx="2" /><path d="M50 12l5-3v11l-5-3M40 5q6-5 13 0M40 24q6 5 13 0" />
          <path d="M72 9h19v11H72zM91 12h3v5h-3" /><path d="M74 11h14v7H74z" fill="#fff" />
          <path d="M111 24A17 17 0 01128 6M115 24a13 13 0 0113-13M119 24a9 9 0 019-9M123 24a5 5 0 015-5" /><circle cx="127" cy="23" r="1.500" fill="#fff" />
          <path d="M141 11h4l5-5v17l-5-5h-4zM153 11q2 3.500 0 7M156 8.500q3.500 6 0 12M158.500 6q1.500 2 1.500 8t-1.500 8" />
        </svg>
        <div className="ml-[19px] flex w-[90px] flex-col items-center text-[18px] leading-[28px]">
          <Fit className="w-[67px]">8:19 AM</Fit>
          <Fit className="w-[74px]">4/7/2022</Fit>
        </div>
        <div className="relative ml-[26px]">
          <svg viewBox="0 0 24 25" className="h-[25px] w-6"><path d="M0 0h24v19h-9l-6 6v-6H0z" fill="#fff" /><path d="M4 5h15M4 9.500h15M4 14h10" stroke="#222" strokeWidth="1.500" /></svg>
          <span className="absolute top-[11px] left-[12px] flex size-6 items-center justify-center rounded-full border border-[#888] bg-[#343230] text-[17px] leading-none">1</span>
        </div>
      </div>
      <div className="mr-[6px] w-px bg-[#777]" />
    </div>
  );
}

export default function App() {
  return (
    <div className={`flex h-[1080px] w-[1920px] flex-col overflow-hidden [&_svg]:[direction:ltr] ${UI}`}>
      <TabStrip />
      <Toolbar />
      <Page />
      <Taskbar />
    </div>
  );
}
